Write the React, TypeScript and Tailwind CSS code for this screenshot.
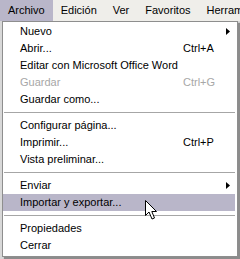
import React from "react";

type Item =
  | { kind: "item"; label: string; shortcut?: string; arrow?: boolean; disabled?: boolean; active?: boolean }
  | { kind: "sep" };

const items: Item[] = [
  { kind: "item", label: "Nuevo", arrow: true },
  { kind: "item", label: "Abrir...", shortcut: "Ctrl+A" },
  { kind: "item", label: "Editar con Microsoft Office Word" },
  { kind: "item", label: "Guardar", shortcut: "Ctrl+G", disabled: true },
  { kind: "item", label: "Guardar como..." },
  { kind: "sep" },
  { kind: "item", label: "Configurar página..." },
  { kind: "item", label: "Imprimir...", shortcut: "Ctrl+P" },
  { kind: "item", label: "Vista preliminar..." },
  { kind: "sep" },
  { kind: "item", label: "Enviar", arrow: true },
  { kind: "item", label: "Importar y exportar...", active: true },
  { kind: "sep" },
  { kind: "item", label: "Propiedades" },
  { kind: "item", label: "Cerrar" },
];

const font = { fontFamily: '"Liberation Sans", Arial, sans-serif' };

export default function App() {
  return (
    <div
      className="relative w-[240px] h-[259px] overflow-hidden bg-[#d8d8d8] text-[11px] text-black"
      style={font}
    >
      <div className="flex h-[21px] bg-[#efeeea] items-stretch">
        <div className="flex items-center px-[8px] bg-[#b9b6c9]">Archivo</div>
        <div className="flex items-center px-[8px]">Edición</div>
        <div className="flex items-center px-[8px]">Ver</div>
        <div className="flex items-center px-[8px]">Favoritos</div>
        <div className="flex items-center px-[8px] whitespace-nowrap">Herramientas</div>
      </div>
      <div className="ml-[2px] w-[236px] h-[236px] border border-[#8e8e8e] bg-white pt-[1px] pb-[2px] pr-[2px] shadow-[2px_2px_1px_rgba(0,0,0,0.35)]">
        {items.map((it, i) =>
          it.kind === "sep" ? (
            <div key={i} className="h-[9px] flex items-center pl-[1px]">
              <div className="h-px w-full bg-[#a6a6a6]" />
            </div>
          ) : (
            <div
              key={i}
              className={`flex items-center h-[17px] pl-[17px] pr-[5px] whitespace-nowrap ${
                it.active ? "bg-[#b9b6c9]" : ""
              } ${it.disabled ? "text-[#a7a7a7]" : ""}`}
            >
              <span className="w-[163px] shrink-0">{it.label}</span>
              <span className="flex-1">{it.shortcut ?? ""}</span>
              {it.arrow && (
                <svg width="4" height="7" viewBox="0 0 4 7" className="shrink-0">
                  <path d="M0 0 L4 3.5 L0 7 Z" fill="#000" />
                </svg>
              )}
            </div>
          )
        )}
      </div>
      <svg
        className="absolute left-[145px] top-[200px]"
        width="13"
        height="21"
        viewBox="0 0 13 21"
      >
        <path
          d="M0.5 0.5 L0.5 15.5 L4 12 L7 19 L9.5 18 L6.8 11.5 L11.5 11.5 Z"
          fill="#fff"
          stroke="#000"
          strokeWidth="1"
          strokeLinejoin="miter"
        />
      </svg>
    </div>
  );
}
